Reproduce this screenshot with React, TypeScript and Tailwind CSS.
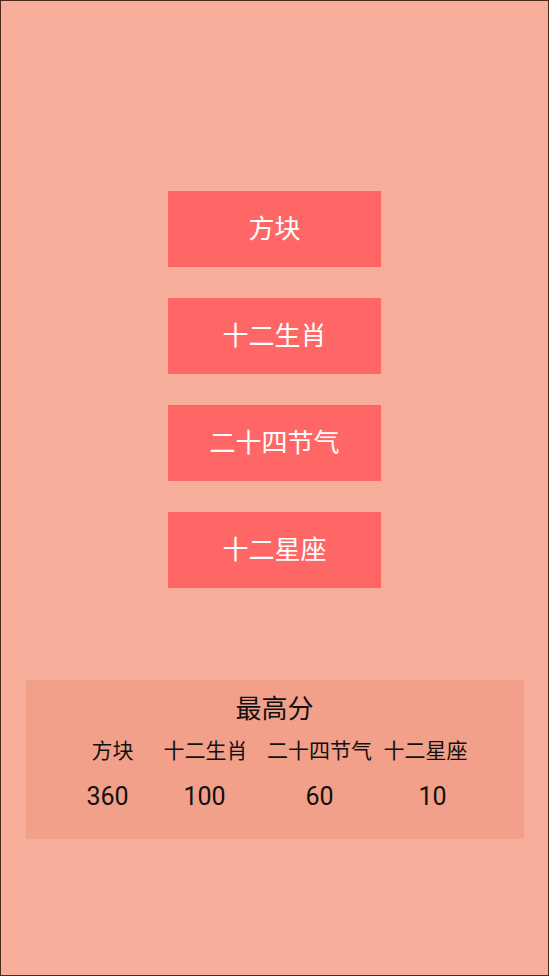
const games = ["方块", "十二生肖", "二十四节气", "十二星座"];

const scores = [
  { label: "方块", value: "360", pad: "pr-[10px]" },
  { label: "十二生肖", value: "100", pad: "pr-[2px]" },
  { label: "二十四节气", value: "60", pad: "" },
  { label: "十二星座", value: "10", pad: "pl-[14px]" },
];

export default function App() {
  return (
    <main
      className="h-[976px] w-[549px] border border-[#4b2a1c] bg-[#f6ae9b] flex flex-col items-center"
      style={{ fontFamily: '"Roboto", "Noto Sans CJK SC", sans-serif' }}
    >
      {/* menu buttons */}
      <div className="mt-[190px] flex flex-col gap-[31px]">
        {games.map((g) => (
          <button
            key={g}
            className="h-[76px] w-[213px] bg-[#ff6666] text-[26px] text-white flex items-center justify-center"
          >
            {g}
          </button>
        ))}
      </div>

      {/* high scores */}
      <section className="mt-[92px] h-[159px] w-[498px] bg-[#f3a08b] text-[#111]">
        <h2 className="mt-[12px] text-center text-[26px] leading-[34px]">最高分</h2>
        <div className="ml-[40px] mt-[11px] grid grid-cols-[94px_92px_136px_76px]">
          {scores.map((s) => (
            <div key={s.label} className="flex flex-col items-center">
              <span className="whitespace-nowrap text-[21px] leading-[28px]">{s.label}</span>
              <span className={`mt-[17px] text-[25px] leading-[30px] ${s.pad}`}>{s.value}</span>
            </div>
          ))}
        </div>
      </section>
    </main>
  );
}
